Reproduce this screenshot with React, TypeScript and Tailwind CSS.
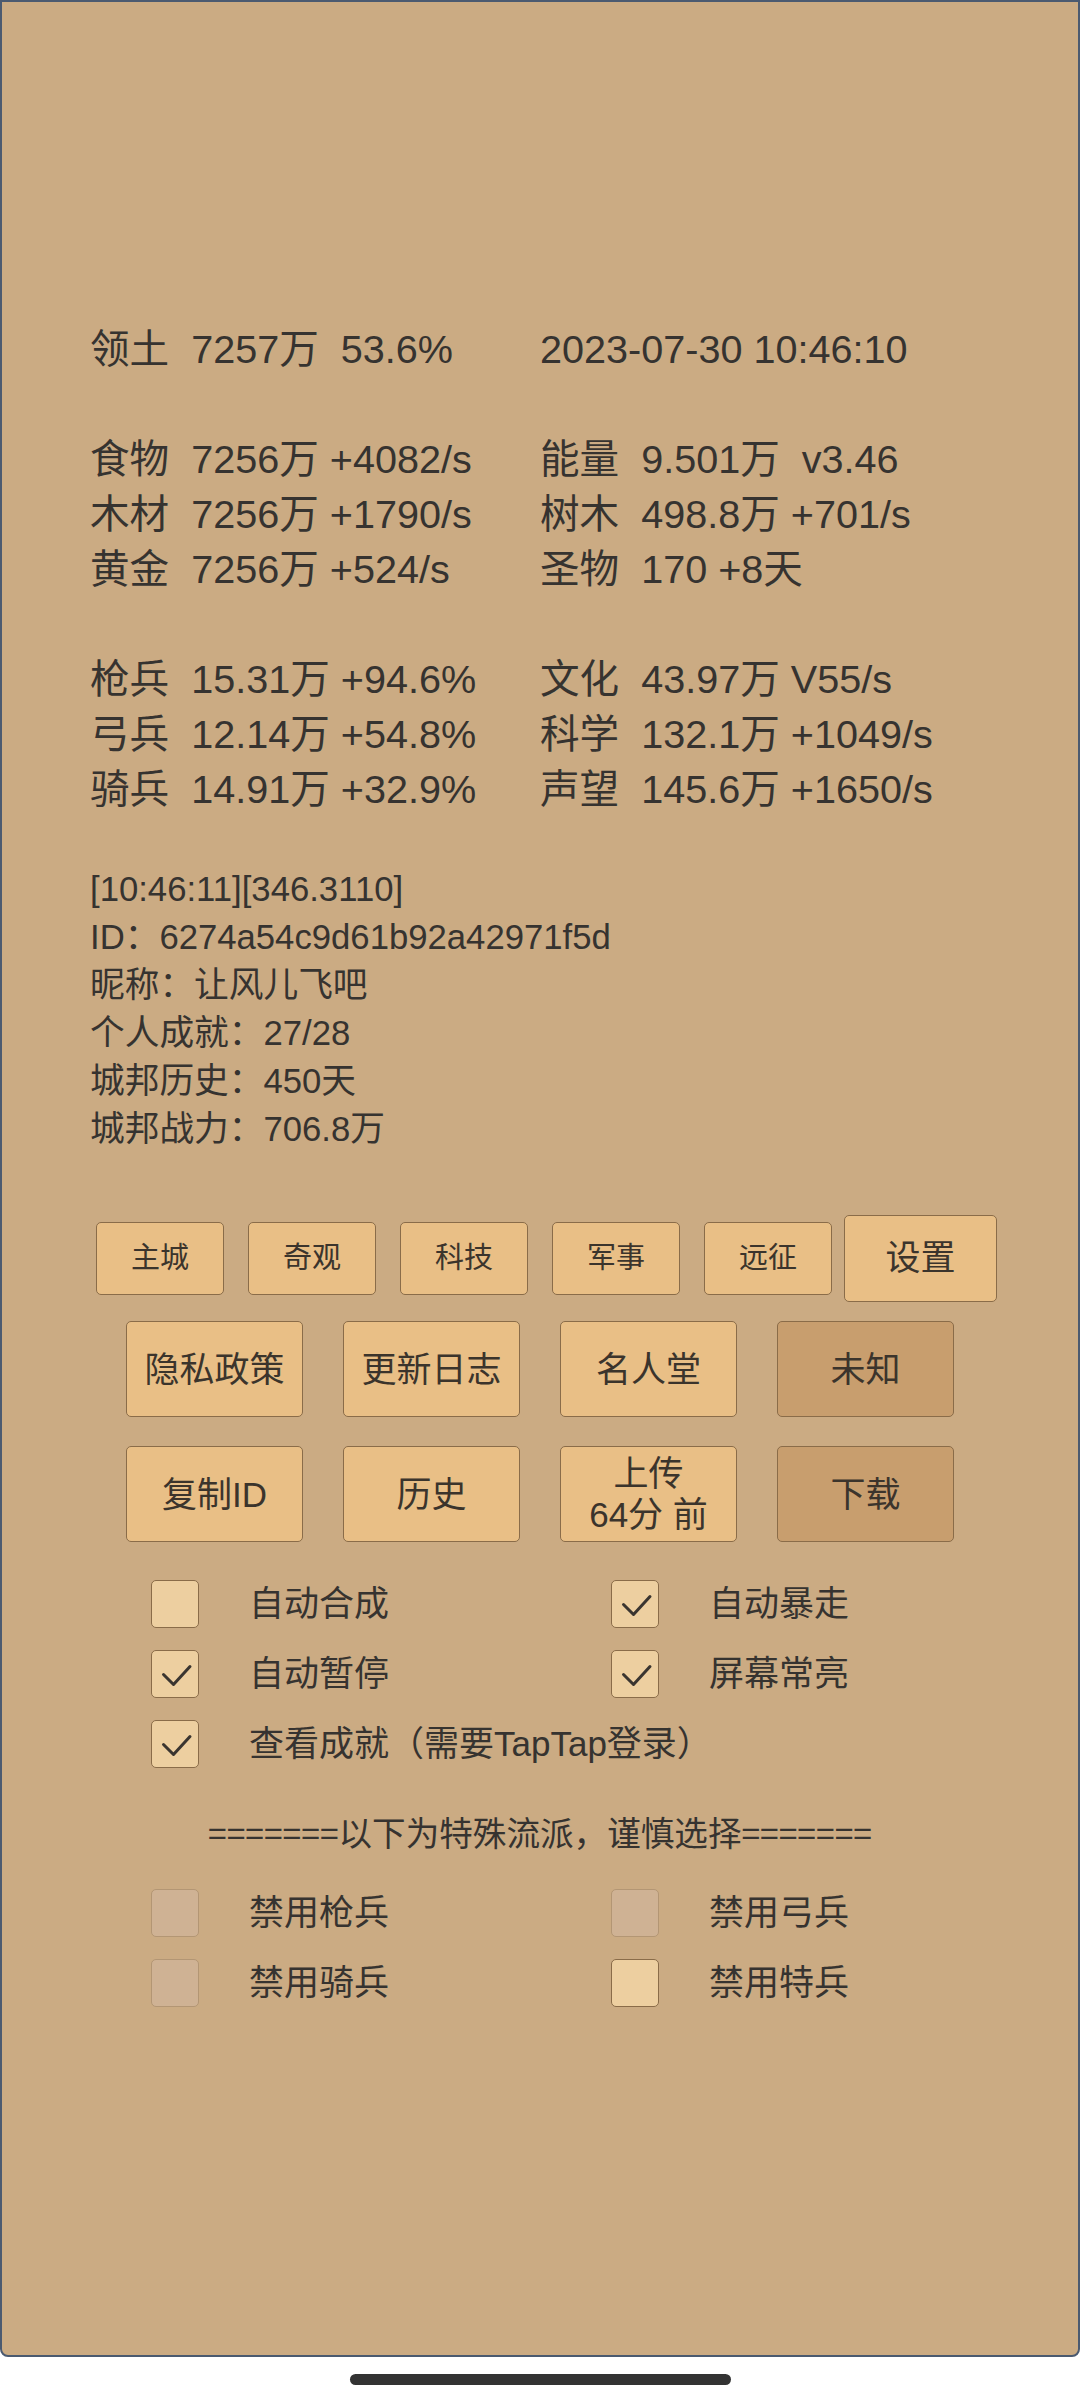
import React from "react";

const FONT = "[font-family:'Liberation_Sans','Noto_Sans_CJK_SC',sans-serif]";

function Check() {
  return (
    <svg width="48" height="48" viewBox="0 0 48 48" className="block">
      <polyline
        points="11.5,23.5 21.5,33.5 38,15.5"
        fill="none"
        stroke="#3a3530"
        strokeWidth="3"
        strokeLinecap="round"
        strokeLinejoin="round"
      />
    </svg>
  );
}

function Box({ checked, disabled }: { checked?: boolean; disabled?: boolean }) {
  return (
    <div
      className={
        disabled
          ? "w-[48px] h-[48px] shrink-0 rounded-[5px] border-[1.5px] border-[#b39674] bg-[#cfb294]"
          : "w-[48px] h-[48px] shrink-0 rounded-[5px] border-[1.5px] border-[#8a6c49] bg-[#edcfa0]"
      }
    >
      {checked ? <Check /> : null}
    </div>
  );
}

function Opt({ label, checked, disabled }: { label: string; checked?: boolean; disabled?: boolean }) {
  return (
    <div className="flex items-center h-[48px]">
      <Box checked={checked} disabled={disabled} />
      <span className="ml-[50px] text-[35px] leading-[48px] whitespace-pre">{label}</span>
    </div>
  );
}

function SmallBtn({ t }: { t: string }) {
  return (
    <div className="w-[128px] h-[73px] rounded-[5px] border-[1.5px] border-[#8a6c49] bg-[#e9bf86] flex items-center justify-center text-[29px] text-[#3b342c]">
      {t}
    </div>
  );
}

function BigBtn({ children, dark }: { children: React.ReactNode; dark?: boolean }) {
  return (
    <div
      className={
        (dark ? "bg-[#c89e6e] " : "bg-[#e9bf86] ") +
        "w-[177px] h-[96px] rounded-[5px] border-[1.5px] border-[#8a6c49] flex flex-col items-center justify-center text-[35px] leading-[41px] text-[#3b342c] text-center"
      }
    >
      {children}
    </div>
  );
}

export default function App() {
  const left = [
    "领土  7257万  53.6%",
    " ",
    "食物  7256万 +4082/s",
    "木材  7256万 +1790/s",
    "黄金  7256万 +524/s",
    " ",
    "枪兵  15.31万 +94.6%",
    "弓兵  12.14万 +54.8%",
    "骑兵  14.91万 +32.9%",
  ];
  const right = [
    "2023-07-30 10:46:10",
    " ",
    "能量  9.501万  v3.46",
    "树木  498.8万 +701/s",
    "圣物  170 +8天",
    " ",
    "文化  43.97万 V55/s",
    "科学  132.1万 +1049/s",
    "声望  145.6万 +1650/s",
  ];
  const info = [
    "[10:46:11][346.3110]",
    "ID：6274a54c9d61b92a42971f5d",
    "昵称：让风儿飞吧",
    "个人成就：27/28",
    "城邦历史：450天",
    "城邦战力：706.8万",
  ];
  return (
    <div className={"w-[1080px] h-[2400px] bg-white " + FONT}>
      <div className="h-[2357px] border-2 border-[#4b5a70] rounded-b-[8px] bg-[#cbab83] text-[#363330] overflow-hidden">
        <div className="pt-[320px] pl-[88px] flex text-[39.6px] leading-[55px] whitespace-pre">
          <div className="w-[450px]">
            {left.map((l, i) => (
              <div key={i} className="h-[55px]">{l}</div>
            ))}
          </div>
          <div>
            {right.map((l, i) => (
              <div key={i} className="h-[55px]">{l}</div>
            ))}
          </div>
        </div>

        <div className="mt-[48px] pl-[88px] text-[34.7px] leading-[48px] whitespace-pre">
          {info.map((l, i) => (
            <div key={i} className="h-[48px]">{l}</div>
          ))}
        </div>

        <div className="mt-[62px] h-[87px] pl-[94px] flex items-center">
          <div className="flex items-center gap-[24px]">
            <SmallBtn t="主城" />
            <SmallBtn t="奇观" />
            <SmallBtn t="科技" />
            <SmallBtn t="军事" />
            <SmallBtn t="远征" />
          </div>
          <div className="ml-[12px] w-[153px] h-[87px] rounded-[5px] border-[1.5px] border-[#8a6c49] bg-[#e9bf86] flex items-center justify-center text-[35px] text-[#3b342c]">
            设置
          </div>
        </div>

        <div className="mt-[19px] flex justify-center gap-[40px]">
          <BigBtn>隐私政策</BigBtn>
          <BigBtn>更新日志</BigBtn>
          <BigBtn>名人堂</BigBtn>
          <BigBtn dark>未知</BigBtn>
        </div>

        <div className="mt-[29px] flex justify-center gap-[40px]">
          <BigBtn>复制ID</BigBtn>
          <BigBtn>历史</BigBtn>
          <BigBtn>
            <span className="block">上传</span>
            <span className="block whitespace-pre">64分 前</span>
          </BigBtn>
          <BigBtn dark>下载</BigBtn>
        </div>

        <div className="mt-[38px] pl-[149px] flex flex-col gap-[22px]">
          <div className="grid grid-cols-[460px_1fr]">
            <Opt label="自动合成" />
            <Opt label="自动暴走" checked />
          </div>
          <div className="grid grid-cols-[460px_1fr]">
            <Opt label="自动暂停" checked />
            <Opt label="屏幕常亮" checked />
          </div>
          <Opt label="查看成就（需要TapTap登录）" checked />
        </div>

        <div className="mt-[40px] text-center text-[33.6px] leading-[48px] whitespace-pre [font-family:'Noto_Sans_CJK_SC',sans-serif]">
          =======以下为特殊流派，谨慎选择=======
        </div>

        <div className="mt-[33px] pl-[149px] flex flex-col gap-[22px]">
          <div className="grid grid-cols-[460px_1fr]">
            <Opt label="禁用枪兵" disabled />
            <Opt label="禁用弓兵" disabled />
          </div>
          <div className="grid grid-cols-[460px_1fr]">
            <Opt label="禁用骑兵" disabled />
            <Opt label="禁用特兵" />
          </div>
        </div>
      </div>
      <div className="mt-[17px] mx-auto w-[381px] h-[11px] rounded-full bg-[#333333]" />
    </div>
  );
}
